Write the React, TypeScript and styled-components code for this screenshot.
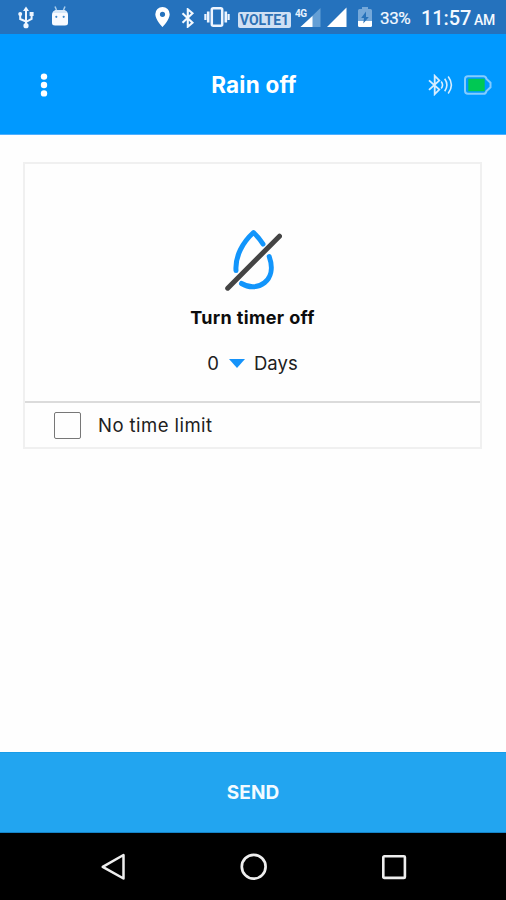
import React from "react";
import styled, { createGlobalStyle } from "styled-components";

const GlobalStyle = createGlobalStyle`
  * { box-sizing: border-box; }
  body { margin: 0; background: #fff; font-family: Inter, "Open Sans", sans-serif; }
  svg { display: block; flex: none; }
`;

const Screen = styled.div`
  width: 506px;
  height: 900px;
  display: flex;
  flex-direction: column;
  background: #fefefe;
  overflow: hidden;
`;

const StatusBar = styled.header`
  height: 34px;
  flex: none;
  display: flex;
  align-items: flex-start;
  background: #2572bd;
  color: #f4f9ff;
  font-family: Roboto, sans-serif;
  white-space: nowrap;
`;

const Slot = styled.div<{ $w: number; $gap: number; $top?: number }>`
  flex: none;
  width: ${(p) => p.$w}px;
  margin-left: ${(p) => p.$gap}px;
  margin-top: ${(p) => p.$top ?? 0}px;
`;

const VolteBadge = styled.div`
  height: 16px;
  border-radius: 2px;
  background: #cfe0f4;
  color: #2c70b4;
  font-size: 14px;
  line-height: 17px;
  font-weight: 700;
  text-align: center;
  letter-spacing: 0;
`;

const Percent = styled.div`
  font-size: 17px;
  line-height: 36px;
  letter-spacing: -0.4px;
  -webkit-text-stroke: 0.2px #f4f9ff;
`;

const Clock = styled.div`
  font-size: 20px;
  line-height: 37px;
  font-weight: 500;
  letter-spacing: -0.1px;
`;

const Meridiem = styled.div`
  font-size: 14px;
  line-height: 41px;
  font-weight: 500;
  letter-spacing: -0.3px;
`;

const AppBar = styled.div`
  height: 101px;
  flex: none;
  display: grid;
  grid-template-columns: 127px 1fr 127px;
  align-items: center;
  padding-top: 2px;
  background: #0099ff;
  border-bottom: 1px solid #4eafff;
`;

const MenuButton = styled.button`
  width: 88px;
  height: 60px;
  border: 0;
  padding: 0;
  background: none;
  display: flex;
  align-items: center;
  justify-content: center;
`;

const Title = styled.h1`
  margin: 0 -2px 0 0;
  color: #fff;
  text-align: center;
  font-size: 22.5px;
  line-height: 28px;
  font-weight: 700;
  letter-spacing: 0.2px;
`;

const DeviceStatus = styled.div`
  display: flex;
  justify-content: flex-end;
  align-items: center;
  gap: 11px;
  padding-right: 14px;
`;

const Content = styled.main`
  flex: 1;
  padding: 27px 24px 0 23px;
`;

const Card = styled.section`
  height: 287px;
  display: flex;
  flex-direction: column;
  border: 2px solid #f0f0f0;
`;

const TimerPanel = styled.div`
  height: 239px;
  display: flex;
  flex-direction: column;
  align-items: center;
  padding-top: 65px;
  border-bottom: 2px solid #dbdbdb;
`;

const TimerTitle = styled.h2`
  margin: 15px 0 0;
  color: #0c0c0c;
  font-size: 18px;
  line-height: 24px;
  font-weight: 700;
  letter-spacing: 0.36px;
`;

const DayPicker = styled.div`
  display: flex;
  align-items: center;
  margin-top: 21px;
  color: #202020;
  font-size: 18.5px;
  line-height: 24px;
`;

const Caret = styled.span`
  margin: 0 9px 0 10px;
  border-left: 8.5px solid transparent;
  border-right: 8.5px solid transparent;
  border-top: 9px solid #1593fa;
`;

const LimitRow = styled.label`
  flex: 1;
  display: flex;
  align-items: center;
  padding-left: 29px;
  gap: 17px;
  color: #202020;
  font-size: 18.5px;
  letter-spacing: 0.45px;
`;

const CheckBox = styled.span`
  width: 27px;
  height: 27px;
  border: 1px solid #777;
  border-radius: 2px;
`;

const SendButton = styled.button`
  height: 81px;
  flex: none;
  border: 0;
  border-top: 1px solid #189ce8;
  border-bottom: 1px solid #1583c7;
  background: #22a5f0;
  color: #f3fbff;
  font: 700 19px/24px Inter, sans-serif;
  letter-spacing: 0.1px;
`;

const NavBar = styled.nav`
  height: 67px;
  flex: none;
  display: flex;
  align-items: center;
  justify-content: space-between;
  padding: 0 98px 0 100px;
  background: #000;
`;

const UsbIcon = () => (
  <svg width="18" height="23" viewBox="0 0 18 23" fill="none" stroke="#eef6ff" strokeWidth="2">
    <path d="M9 4v15M9 15.5 3.2 13V9M9 16l5.6-3.2V9" />
    <path d="M9 .5 12 5H6z" fill="#eef6ff" stroke="none" />
    <circle cx="9" cy="19.7" r="2.6" fill="#eef6ff" stroke="none" />
    <circle cx="3.2" cy="8" r="2" fill="#eef6ff" stroke="none" />
    <path d="M12.6 6h4v4h-4z" fill="#eef6ff" stroke="none" />
  </svg>
);

const AndroidIcon = () => (
  <svg width="18" height="20" viewBox="0 0 18 20">
    <path d="M4 .5 5.5 4M14 .5 12.5 4" stroke="#a9cdec" strokeWidth="1.5" />
    <path d="M1 9q0-4 4-5h8q4 1 4 5v8q0 2.5-3 2.5H4q-3 0-3-2.5z" fill="#f8fbff" />
    <path d="M2 7q1-2.5 3-3h8q2 .5 3 3z" fill="#d5e7f8" />
    <circle cx="5.3" cy="10.8" r="1.1" fill="#3f88cc" />
    <circle cx="12.7" cy="10.8" r="1.1" fill="#3f88cc" />
  </svg>
);

const PinIcon = () => (
  <svg width="15" height="20" viewBox="0 0 15 20">
    <path fillRule="evenodd" d="M7.5 0A7.2 7.2 0 0 0 .3 7.2C.3 12.5 7.5 20 7.5 20s7.2-7.5 7.2-12.8A7.2 7.2 0 0 0 7.5 0zm0 4.7a2.6 2.6 0 1 1 0 5.2 2.6 2.6 0 0 1 0-5.2z" fill="#fff" />
  </svg>
);

const BluetoothIcon = () => (
  <svg width="14" height="20" viewBox="0 0 14 20" fill="none" stroke="#f3f9ff" strokeWidth="2.1">
    <path d="m1.5 5.2 10 9.5-4.7 4V1.3l4.7 4-10 9.5" />
  </svg>
);

const VibrateIcon = () => (
  <svg width="26" height="20" viewBox="0 0 26 20" fill="none" stroke="#edf5ff">
    <rect x="7.8" y="1.3" width="10.4" height="17.4" rx="1.5" strokeWidth="2.5" />
    <path d="M4.2 4.5v11M21.8 4.5v11" strokeWidth="2.6" />
    <path d="M1.4 7v6M24.6 7v6" strokeWidth="2.2" />
  </svg>
);

const MobileSignalIcon = () => (
  <svg width="26" height="21" viewBox="0 0 26 21">
    <path d="M25.5 1v19H5.5z" fill="#659fd5" />
    <path d="M17.5 9v11h-12z" fill="#fff" />
    <text x="0" y="9.5" fontSize="10" fontWeight="700" fill="#e8f3ff" textLength="12">4G</text>
  </svg>
);

const FullSignalIcon = () => (
  <svg width="20" height="20" viewBox="0 0 20 20">
    <path d="M19.5 .5V20H0z" fill="#fff" />
  </svg>
);

const PhoneBatteryIcon = () => (
  <svg width="14" height="20" viewBox="0 0 14 20">
    <path d="M4 0h6v2h2.5Q14 2 14 3.5V14H0V3.5Q0 2 1.5 2H4z" fill="#75a8d9" />
    <path d="M0 14h14v4.5Q14 20 12.5 20h-11Q0 20 0 18.5z" fill="#fff" />
    <path d="M8 4.5 3.2 11H6l-.7 5.5L10.8 10H8z" fill="#2872b9" />
  </svg>
);

const MoreIcon = () => (
  <svg width="8" height="24" viewBox="0 0 8 24" fill="#fff">
    <circle cx="4" cy="3.6" r="3.2" />
    <circle cx="4" cy="12" r="3.2" />
    <circle cx="4" cy="20.4" r="3.2" />
  </svg>
);

const LinkedBluetoothIcon = () => (
  <svg width="25" height="22" viewBox="0 0 25 22" fill="none" stroke="#d6edff" strokeWidth="1.8">
    <path d="m1 6.3 10.3 9.3-4.6 4.6V1.8l4.6 4.6L1 15.8" />
    <path d="M13.2 7.5q2.7 3.5 0 7M16.7 4.8q4.4 6.2 0 12.4M20.2 2.5q6.4 8.5 0 17" strokeWidth="1.6" />
  </svg>
);

const DeviceBatteryIcon = () => (
  <svg width="28" height="20" viewBox="0 0 28 20">
    <path d="M4 1.2h15.5Q22 1.2 22.5 4l4 3.7v4.6l-4 3.7q-.5 2.8-3 2.8H4q-3 0-3-3V4.2q0-3 3-3z" fill="none" stroke="#83ccff" strokeWidth="2" />
    <path d="M4.3 3.8h16.4v12.4H4.3z" fill="#00c853" />
  </svg>
);

const DropOffIcon = () => (
  <svg width="58" height="62" viewBox="0 0 58 62" fill="none" strokeLinecap="round">
    <path d="M12 41.5C11 27 19 13 29.5 3.5Q35 8.5 39 15M45.2 27.5C54 52 33 64 17.5 54.5" stroke="#1295fb" strokeWidth="5" strokeLinejoin="round" />
    <path d="M3.7 59.2 55.5 7.2" stroke="#444" strokeWidth="5" />
  </svg>
);

const BackIcon = () => (
  <svg width="28" height="28" viewBox="0 0 28 28" fill="none" stroke="#eee" strokeWidth="2.5" strokeLinejoin="round">
    <path d="M23.5 2v23.5L2.7 13.8z" />
  </svg>
);

const HomeIcon = () => (
  <svg width="28" height="28" viewBox="0 0 28 28" fill="none" stroke="#eee" strokeWidth="2.7">
    <circle cx="13.7" cy="13.7" r="11.9" />
  </svg>
);

const RecentsIcon = () => (
  <svg width="28" height="28" viewBox="0 0 28 28" fill="none" stroke="#eee" strokeWidth="2.6">
    <rect x="3.3" y="3.3" width="21.6" height="21.6" rx="1" />
  </svg>
);

export default function App() {
  return (
    <Screen>
      <GlobalStyle />
      <StatusBar>
        <Slot $w={18} $gap={17} $top={6}><UsbIcon /></Slot>
        <Slot $w={18} $gap={16} $top={6}><AndroidIcon /></Slot>
        <Slot $w={15} $gap={86} $top={7}><PinIcon /></Slot>
        <Slot $w={14} $gap={11} $top={8}><BluetoothIcon /></Slot>
        <Slot $w={26} $gap={9} $top={7}><VibrateIcon /></Slot>
        <Slot $w={53} $gap={8} $top={12}><VolteBadge>VOLTE1</VolteBadge></Slot>
        <Slot $w={26} $gap={4} $top={7}><MobileSignalIcon /></Slot>
        <Slot $w={20} $gap={6} $top={7}><FullSignalIcon /></Slot>
        <Slot $w={14} $gap={11} $top={7}><PhoneBatteryIcon /></Slot>
        <Slot $w={32} $gap={8}><Percent>33%</Percent></Slot>
        <Slot $w={50} $gap={9}><Clock>11:57</Clock></Slot>
        <Slot $w={22} $gap={3}><Meridiem>AM</Meridiem></Slot>
      </StatusBar>
      <AppBar>
        <MenuButton aria-label="Menu"><MoreIcon /></MenuButton>
        <Title>Rain off</Title>
        <DeviceStatus>
          <LinkedBluetoothIcon />
          <DeviceBatteryIcon />
        </DeviceStatus>
      </AppBar>
      <Content>
        <Card>
          <TimerPanel>
            <DropOffIcon />
            <TimerTitle>Turn timer off</TimerTitle>
            <DayPicker>0<Caret />Days</DayPicker>
          </TimerPanel>
          <LimitRow><CheckBox />No time limit</LimitRow>
        </Card>
      </Content>
      <SendButton>SEND</SendButton>
      <NavBar>
        <BackIcon />
        <HomeIcon />
        <RecentsIcon />
      </NavBar>
    </Screen>
  );
}
